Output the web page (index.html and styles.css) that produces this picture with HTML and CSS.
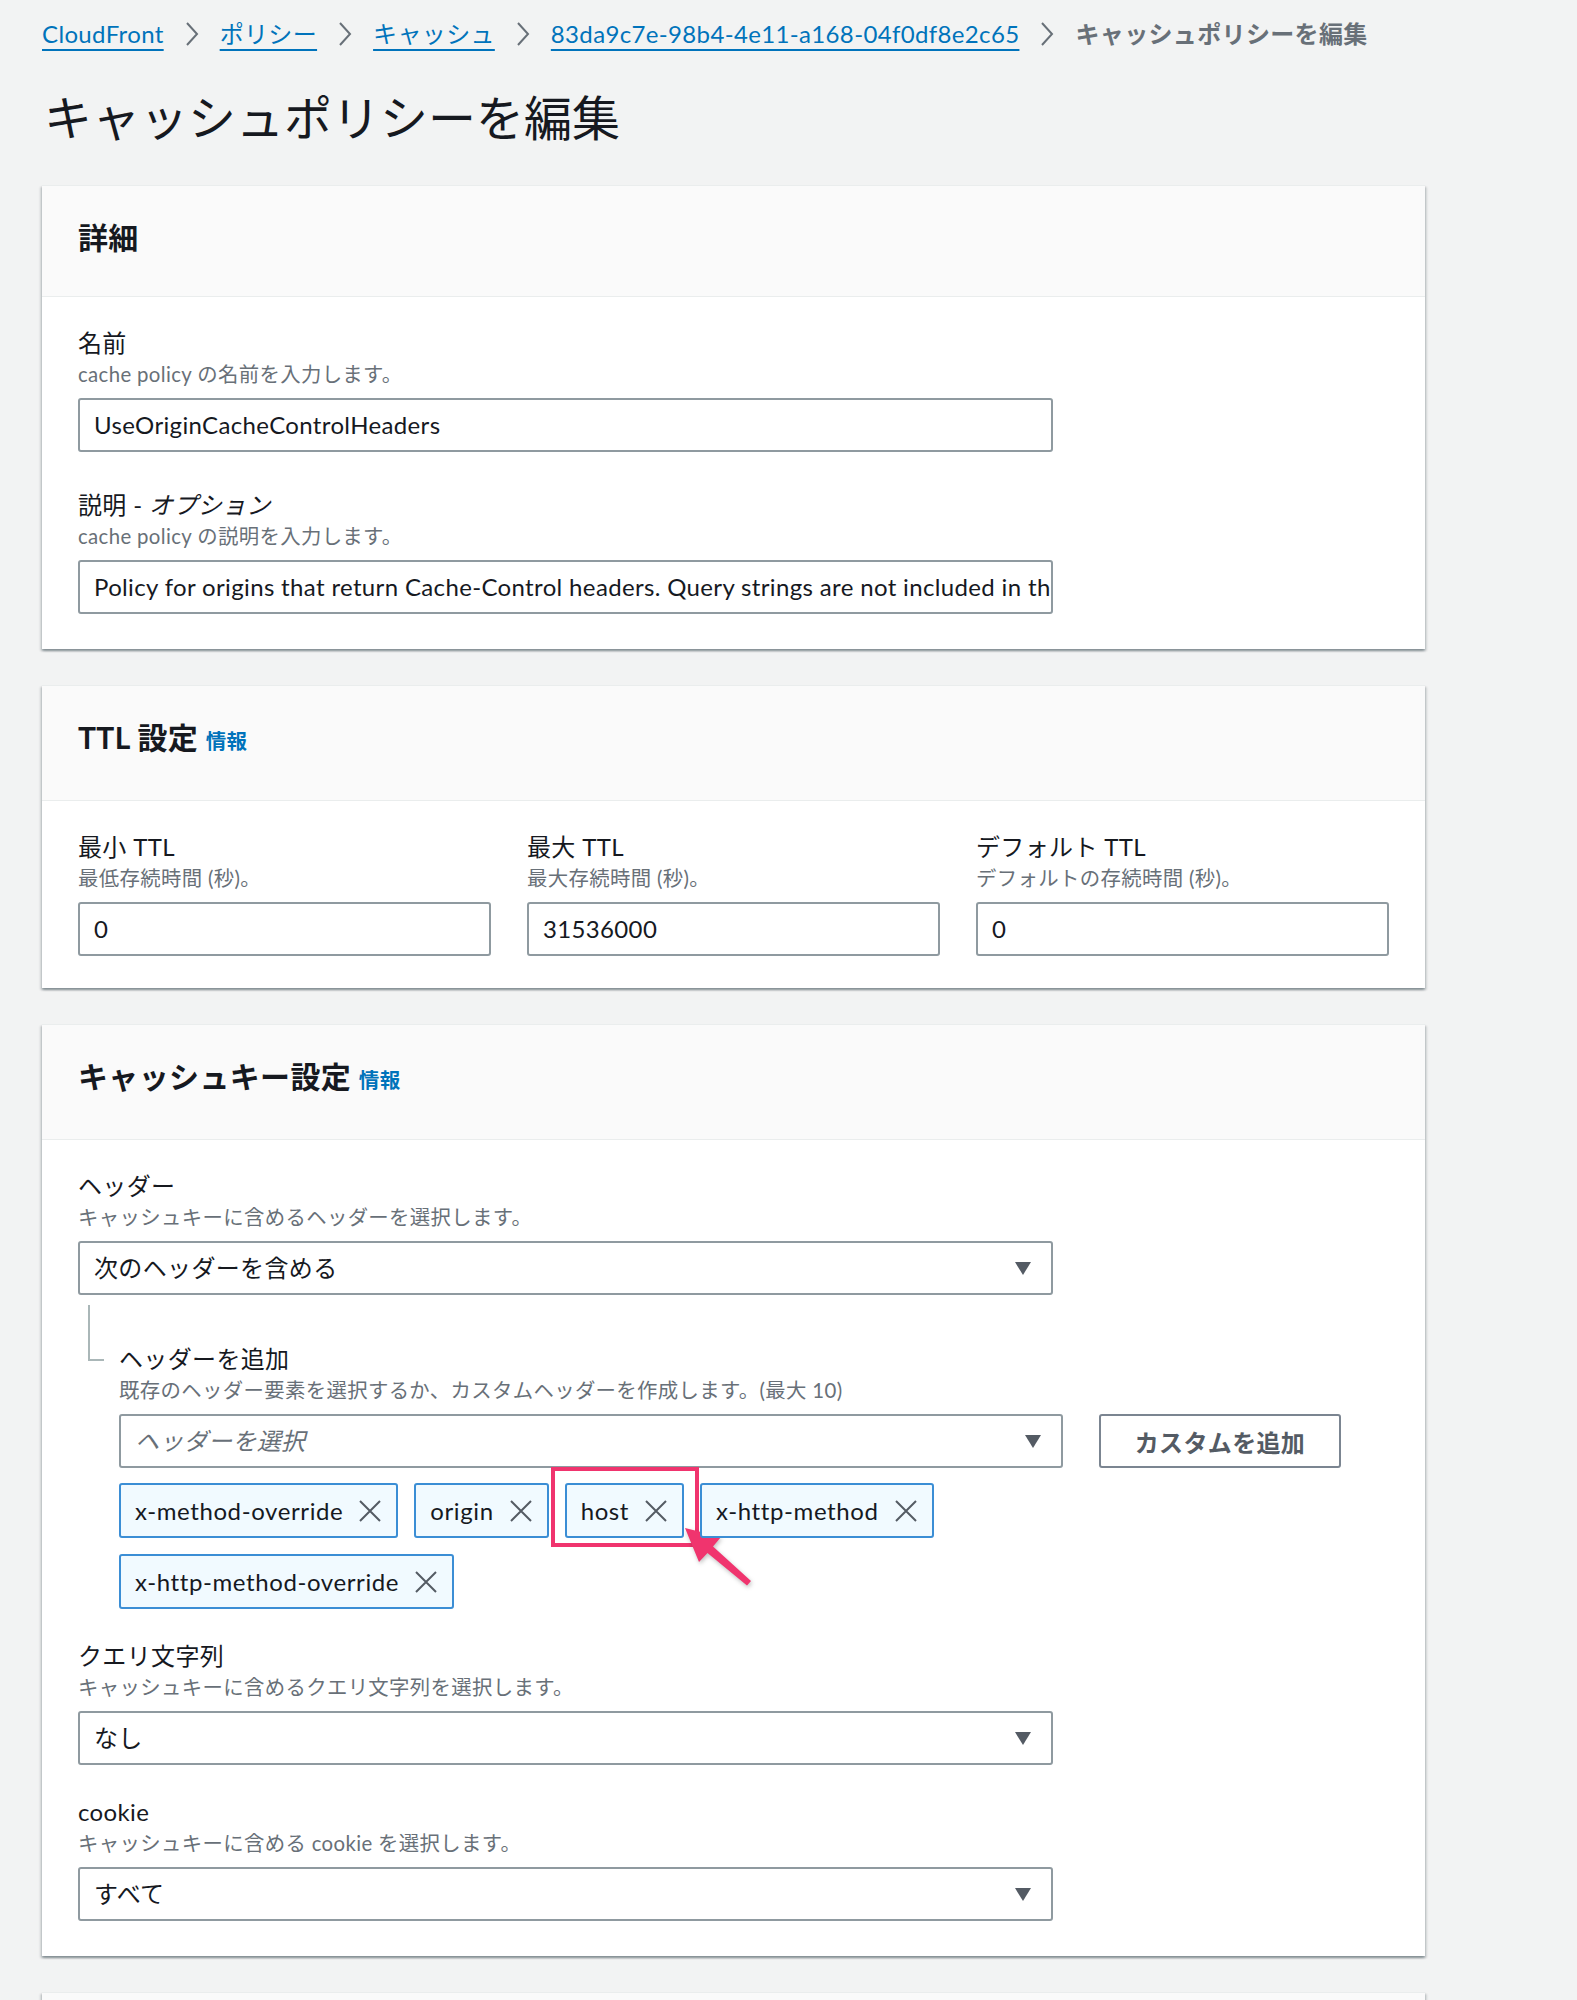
FILE: index.html
```html
<!DOCTYPE html>
<html lang="ja">
<head>
<meta charset="utf-8">
<title>キャッシュポリシーを編集</title>
<link rel="stylesheet" href="styles.css">
</head>
<body>
<div class="page">
  <nav class="crumbs">
    <a class="crumb" href="#">CloudFront</a>
    <span class="sep"><svg width="14" height="26" viewBox="0 0 14 26"><path d="M2 2 L12 13 L2 24" fill="none" stroke="#687078" stroke-width="2"/></svg></span>
    <a class="crumb" href="#">ポリシー</a>
    <span class="sep"><svg width="14" height="26" viewBox="0 0 14 26"><path d="M2 2 L12 13 L2 24" fill="none" stroke="#687078" stroke-width="2"/></svg></span>
    <a class="crumb" href="#">キャッシュ</a>
    <span class="sep"><svg width="14" height="26" viewBox="0 0 14 26"><path d="M2 2 L12 13 L2 24" fill="none" stroke="#687078" stroke-width="2"/></svg></span>
    <a class="crumb" href="#">83da9c7e-98b4-4e11-a168-04f0df8e2c65</a>
    <span class="sep"><svg width="14" height="26" viewBox="0 0 14 26"><path d="M2 2 L12 13 L2 24" fill="none" stroke="#687078" stroke-width="2"/></svg></span>
    <span class="crumb-current">キャッシュポリシーを編集</span>
  </nav>

  <h1 class="title">キャッシュポリシーを編集</h1>

  <section class="panel">
    <div class="panel-head"><h2>詳細</h2></div>
    <div class="panel-body gap-wide">
      <div class="field">
        <div class="label">名前</div>
        <div class="desc">cache policy の名前を入力します。</div>
        <div class="control w-main">UseOriginCacheControlHeaders</div>
      </div>
      <div class="field">
        <div class="label">説明 - <i>オプション</i></div>
        <div class="desc">cache policy の説明を入力します。</div>
        <div class="control w-main">Policy for origins that return Cache-Control headers. Query strings are not included in the cache key by default.</div>
      </div>
    </div>
  </section>

  <section class="panel">
    <div class="panel-head"><h2>TTL 設定 <a class="info" href="#">情報</a></h2></div>
    <div class="panel-body body-ttl">
      <div class="ttl-grid">
        <div class="field">
          <div class="label">最小 TTL</div>
          <div class="desc">最低存続時間 (秒)。</div>
          <div class="control">0</div>
        </div>
        <div class="field">
          <div class="label">最大 TTL</div>
          <div class="desc">最大存続時間 (秒)。</div>
          <div class="control">31536000</div>
        </div>
        <div class="field">
          <div class="label">デフォルト TTL</div>
          <div class="desc">デフォルトの存続時間 (秒)。</div>
          <div class="control">0</div>
        </div>
      </div>
    </div>
  </section>

  <section class="panel">
    <div class="panel-head"><h2>キャッシュキー設定 <a class="info" href="#">情報</a></h2></div>
    <div class="panel-body gap-narrow">
      <div class="field">
        <div class="label">ヘッダー</div>
        <div class="desc">キャッシュキーに含めるヘッダーを選択します。</div>
        <div class="control select w-main">次のヘッダーを含める<span class="caret"></span></div>
        <div class="sub">
          <div class="connector"></div>
          <div class="sub-content">
            <div class="label">ヘッダーを追加</div>
            <div class="desc">既存のヘッダー要素を選択するか、カスタムヘッダーを作成します。(最大 10)</div>
            <div class="sub-row">
              <div class="control select placeholder w-sub">ヘッダーを選択<span class="caret"></span></div>
              <button class="btn">カスタムを追加</button>
            </div>
            <div class="tokens">
              <span class="token">x-method-override<svg class="x" width="22" height="22" viewBox="0 0 22 22"><path d="M1 1 L21 21 M21 1 L1 21" stroke="#545b64" stroke-width="2"/></svg></span>
              <span class="token">origin<svg class="x" width="22" height="22" viewBox="0 0 22 22"><path d="M1 1 L21 21 M21 1 L1 21" stroke="#545b64" stroke-width="2"/></svg></span>
              <span class="token token-marked">host<svg class="x" width="22" height="22" viewBox="0 0 22 22"><path d="M1 1 L21 21 M21 1 L1 21" stroke="#545b64" stroke-width="2"/></svg>
                <span class="mark-box"></span>
                <svg class="mark-arrow" width="70" height="64" viewBox="0 0 70 64"><polygon points="0,0 36,9 28,18.5 66,53 62,57.5 22.5,25 14,34" fill="#f0346e"/></svg>
              </span>
              <span class="token">x-http-method<svg class="x" width="22" height="22" viewBox="0 0 22 22"><path d="M1 1 L21 21 M21 1 L1 21" stroke="#545b64" stroke-width="2"/></svg></span>
              <span class="token">x-http-method-override<svg class="x" width="22" height="22" viewBox="0 0 22 22"><path d="M1 1 L21 21 M21 1 L1 21" stroke="#545b64" stroke-width="2"/></svg></span>
            </div>
          </div>
        </div>
      </div>
      <div class="field">
        <div class="label">クエリ文字列</div>
        <div class="desc">キャッシュキーに含めるクエリ文字列を選択します。</div>
        <div class="control select w-main">なし<span class="caret"></span></div>
      </div>
      <div class="field">
        <div class="label">cookie</div>
        <div class="desc">キャッシュキーに含める cookie を選択します。</div>
        <div class="control select w-main">すべて<span class="caret"></span></div>
      </div>
    </div>
  </section>

  <section class="panel">
    <div class="panel-head"><h2>&nbsp;</h2></div>
  </section>
</div>
</body>
</html>
```

FILE: styles.css
```css
* { box-sizing: border-box; }

html, body {
  margin: 0;
  padding: 0;
  background: #f2f3f3;
}

body {
  font-family: "Lato", "Noto Sans CJK JP", sans-serif;
  color: #16191f;
  font-size: 24px;
  letter-spacing: 0.35px;
}

.page {
  padding: 16px 0 0 42px;
  width: 1425px;
}

/* Breadcrumbs */
.crumbs {
  display: flex;
  align-items: center;
  height: 36px;
  line-height: 36px;
  font-size: 24px;
  white-space: nowrap;
}

.crumb {
  color: #0073bb;
  text-decoration: underline;
  text-decoration-thickness: 2px;
  text-underline-offset: 6px;
}

.sep {
  display: flex;
  align-items: center;
  margin: 0 21px;
}

.crumb-current {
  color: #687078;
  font-weight: 700;
}

/* Title */
.title {
  margin: 38px 0 39px 2px;
  font-size: 48px;
  line-height: 56px;
  font-weight: 400;
  letter-spacing: 0;
  color: #16191f;
}

/* Panels */
.panel {
  background: #fff;
  border-top: 1px solid #eaeded;
  box-shadow: 0 2px 2px 0 rgba(0, 28, 36, 0.3),
              2px 2px 2px 0 rgba(0, 28, 36, 0.12),
              -2px 2px 2px 0 rgba(0, 28, 36, 0.12);
  margin-bottom: 36px;
}

.panel-head {
  background: #fafafa;
  border-bottom: 1px solid #eaeded;
  padding: 31px 36px 39px;
}

.panel-head h2 {
  margin: 0;
  font-size: 30px;
  line-height: 40px;
  font-weight: 700;
}

.info {
  color: #0073bb;
  font-size: 20.5px;
  font-weight: 700;
  text-decoration: none;
}

.panel-body {
  padding: 27px 36px 35px;
  display: flex;
  flex-direction: column;
}

.body-ttl { padding-bottom: 32px; }

.gap-wide { gap: 34px; }
.gap-narrow { gap: 28px; }

/* Fields */
.label {
  font-size: 24px;
  line-height: 37px;
}

.label i {
  font-style: italic;
}

.desc {
  font-size: 20.4px;
  line-height: 27px;
  color: #687078;
  margin-bottom: 10px;
}

.control {
  position: relative;
  height: 54px;
  border: 2px solid #8f9aa0;
  border-radius: 3px;
  background: #fff;
  padding: 0 14px;
  font-size: 24px;
  line-height: 50px;
  white-space: nowrap;
  overflow: hidden;
  color: #16191f;
}

.w-main { width: 975px; }
.w-sub { width: 944px; }

.select {
  padding-right: 56px;
}

.caret {
  position: absolute;
  right: 20px;
  top: 19px;
  width: 0;
  height: 0;
  border-left: 8px solid transparent;
  border-right: 8px solid transparent;
  border-top: 13px solid #545b64;
}

.placeholder {
  color: #687078;
  font-style: italic;
}

/* TTL grid */
.ttl-grid {
  display: grid;
  grid-template-columns: repeat(3, 1fr);
  gap: 36px;
}

/* Sub section with tree connector */
.sub {
  display: grid;
  grid-template-columns: 41px 1fr;
  margin-top: 10px;
}

.connector {
  margin-left: 10px;
  width: 16px;
  height: 56px;
  border-left: 2px solid #aab7b8;
  border-bottom: 2px solid #aab7b8;
}

.sub-content {
  padding-top: 35px;
}

.sub-row {
  display: flex;
  gap: 36px;
}

.btn {
  width: 242px;
  height: 54px;
  border: 2px solid #7b8591;
  border-radius: 3px;
  background: #fff;
  color: #545b64;
  font-family: inherit;
  font-size: 24px;
  font-weight: 700;
  letter-spacing: 0.35px;
  padding: 0;
}

/* Tokens */
.tokens {
  display: flex;
  flex-wrap: wrap;
  gap: 16px;
  margin-top: 15px;
  width: 980px;
}

.token {
  position: relative;
  display: inline-flex;
  align-items: center;
  gap: 16px;
  height: 55px;
  padding: 0 15px 0 14px;
  background: #f1faff;
  border: 2px solid #3b8ed5;
  border-radius: 3px;
  font-size: 24px;
  letter-spacing: 0.6px;
  color: #16191f;
  white-space: nowrap;
}

.x { flex: none; }

.mark-box {
  position: absolute;
  left: -16px;
  top: -18px;
  right: -17px;
  bottom: -11px;
  border: 4px solid #f0346e;
  pointer-events: none;
}

.mark-arrow {
  position: absolute;
  left: calc(100% + 3px);
  top: 43px;
  overflow: visible;
  filter: drop-shadow(1px 2px 2px rgba(0, 0, 0, 0.25));
}
```
